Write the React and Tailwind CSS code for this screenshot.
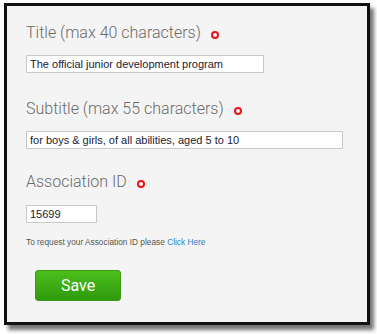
import React from "react";

const Required = () => (
  <span className="inline-block w-[8px] h-[8px] rounded-full border-[2px] border-[#e8141c] ml-[10px] align-middle relative top-[1px]" />
);

const Label = ({ children, className = "" }) => (
  <div
    className={`text-[16px] leading-[20px] text-[#6a6a6a] font-light ${className}`}
    style={{ fontFamily: "Roboto, 'Liberation Sans', sans-serif" }}
  >
    {children}
    <Required />
  </div>
);

const Field = ({ value, width, className = "" }) => (
  <input
    readOnly
    value={value}
    className={`${width} h-[18px] border border-[#c9c9c9] bg-white px-[3px] text-[11px] text-[#1a1a33] outline-none ${className}`}
    style={{ fontFamily: "Arial, 'Liberation Sans', sans-serif" }}
  />
);

export default function App() {
  return (
    <div className="w-[377px] h-[334px] bg-white pt-[3px] pl-[4px]">
      <div className="w-[366px] h-[322px] border-[3px] border-[#111] bg-[#f4f4f4] shadow-[4px_5px_4px_rgba(0,0,0,0.55)] pl-[19px] pt-[17px] flex flex-col items-start">
        <Label>Title (max 40 characters)</Label>
        <Field value="The official junior development program" width="w-[238px]" className="mt-[12px]" />

        <Label className="mt-[26px]">Subtitle (max 55 characters)</Label>
        <Field value="for boys & girls, of all abilities, aged 5 to 10" width="w-[317px]" className="mt-[12px]" />

        <Label className="mt-[23px]">Association ID</Label>
        <Field value="15699" width="w-[71px]" className="mt-[13px]" />

        <p
          className="mt-[14px] text-[8.3px] leading-[10px] text-[#555]"
          style={{ fontFamily: "'Liberation Sans', sans-serif" }}
        >
          To request your Association ID please{" "}
          <a className="text-[#2a7fc9]">Click Here</a>
        </p>

        <button
          className="mt-[23px] ml-[9px] w-[86px] h-[31px] rounded-[3px] border border-[#3a9a12] bg-gradient-to-b from-[#4cbf1c] to-[#2f9a0e] text-white text-[16px]"
          style={{ fontFamily: "Roboto, 'Liberation Sans', sans-serif" }}
        >
          Save
        </button>
      </div>
    </div>
  );
}
